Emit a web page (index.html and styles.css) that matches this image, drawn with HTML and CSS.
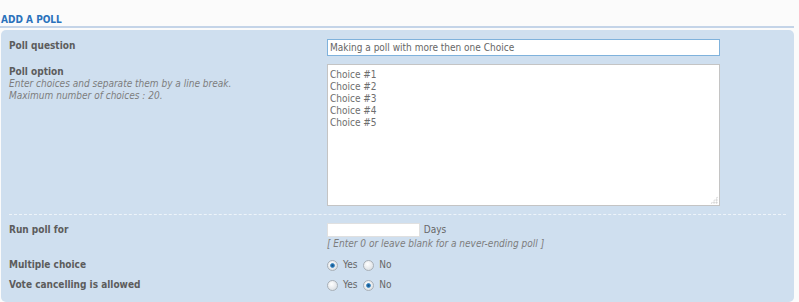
FILE: index.html
```html
<!DOCTYPE html>
<html lang="en">

<head>
    <meta charset="UTF-8">
    <title>Add a poll</title>
    <link rel="stylesheet" href="styles.css">
</head>

<body>
    <h2 class="poll-title">ADD A POLL</h2>
    <div class="poll-panel">
        <div class="poll-row row-question">
            <div class="poll-label"><b>Poll question</b></div>
            <div class="poll-field">
                <input class="question-inp" type="text" value="Making a poll with more then one Choice">
            </div>
        </div>
        <div class="poll-row row-option">
            <div class="poll-label">
                <b>Poll option</b>
                <span class="hint">Enter choices and separate them by a line break.</span>
                <span class="hint">Maximum number of choices : 20.</span>
            </div>
            <div class="poll-field area-wrap">
                <textarea class="option-area">Choice #1
Choice #2
Choice #3
Choice #4
Choice #5</textarea>
                <span class="grip"></span>
            </div>
        </div>
        <div class="poll-sep"></div>
        <div class="poll-row row-run">
            <div class="poll-label"><b>Run poll for</b></div>
            <div class="poll-field">
                <input class="days-inp" type="text"> <span class="days">Days</span>
                <span class="hint">[ Enter 0 or leave blank for a never-ending poll ]</span>
            </div>
        </div>
        <div class="poll-row row-radio">
            <div class="poll-label"><b>Multiple choice</b></div>
            <div class="poll-field">
                <label><input type="radio" name="multi" checked> Yes</label>
                <label><input type="radio" name="multi"> No</label>
            </div>
        </div>
        <div class="poll-row row-radio">
            <div class="poll-label"><b>Vote cancelling is allowed</b></div>
            <div class="poll-field">
                <label><input type="radio" name="cancel"> Yes</label>
                <label><input type="radio" name="cancel" checked> No</label>
            </div>
        </div>
    </div>
</body>

</html>
```

FILE: styles.css
```css
* {
    margin: 0;
    padding: 0;
    box-sizing: border-box;
    font-family: "DejaVu Sans Condensed", "DejaVu Sans", Verdana, sans-serif;
}

body {
    background-color: #fbfbfb;
    width: 794px;
    padding-top: 14px;
    font-size: 10px;
    color: #666;
}

.poll-title {
    font-size: 10px;
    font-weight: bold;
    color: #2a72bb;
    padding-left: 1px;
    height: 14px;
    line-height: 11px;
    border-bottom: 2px solid #c4d4e8;
}

.poll-panel {
    margin: 2px 0 0 1px;
    background-color: #cfdfef;
    border-radius: 5px;
    padding: 9px 8px 11px 8px;
}

.poll-row {
    display: grid;
    grid-template-columns: 318px 393px;
}

.poll-label b {
    display: block;
    color: #5c5c5c;
    font-size: 10px;
    line-height: 12px;
}

.hint {
    display: block;
    font-style: italic;
    color: #7d7d7d;
    line-height: 12px;
}

.row-question {
    height: 25px;
}

.row-question .poll-label {
    padding-top: 1px;
}

.question-inp {
    width: 393px;
    height: 17px;
    border: 1px solid #7fb2dc;
    padding: 0 2px;
    font-size: 10px;
    color: #666;
    background-color: white;
}

.row-option .poll-label {
    padding-top: 2px;
}

.area-wrap {
    position: relative;
}

.option-area {
    display: block;
    width: 393px;
    height: 142px;
    border: 1px solid #c4c4c4;
    padding: 4px 2px;
    font-size: 10px;
    line-height: 12px;
    color: #6e6e6e;
    resize: none;
    background-color: white;
}

.grip {
    position: absolute;
    right: 2px;
    bottom: 2px;
    width: 8px;
    height: 8px;
    background:
        radial-gradient(circle, #c8c8c8 45%, transparent 50%) 0 0 / 2.7px 2.7px;
    clip-path: polygon(100% 0, 100% 100%, 0 100%);
}

.poll-sep {
    border-top: 1px dashed #eef4fa;
    margin: 8px 0 8px 0;
}

.row-run .poll-label {
    padding-top: 1px;
}

.days-inp {
    width: 93px;
    height: 14px;
    border: 1px solid #e0e0e0;
    background-color: white;
    vertical-align: top;
}

.days {
    line-height: 13px;
    padding-left: 1px;
}

.row-run .hint {
    margin-top: 1px;
}

.row-radio {
    margin-top: 9px;
    height: 12px;
}

.row-radio + .row-radio {
    margin-top: 8px;
}

.row-radio .poll-field label {
    display: inline-flex;
    align-items: center;
    gap: 5px;
    margin-right: 3px;
    line-height: 12px;
}

.row-radio input {
    appearance: none;
    width: 11px;
    height: 11px;
    border-radius: 50%;
    border: 1px solid #a9b0b7;
    background: radial-gradient(circle at 40% 35%, #ffffff, #d3d8dd);
}

.row-radio input:checked {
    background:
        radial-gradient(circle, #174f80 0, #2a7cbc 28%, #9fc3e0 38%, transparent 44%),
        radial-gradient(circle at 40% 35%, #ffffff, #d3d8dd);
}
```
